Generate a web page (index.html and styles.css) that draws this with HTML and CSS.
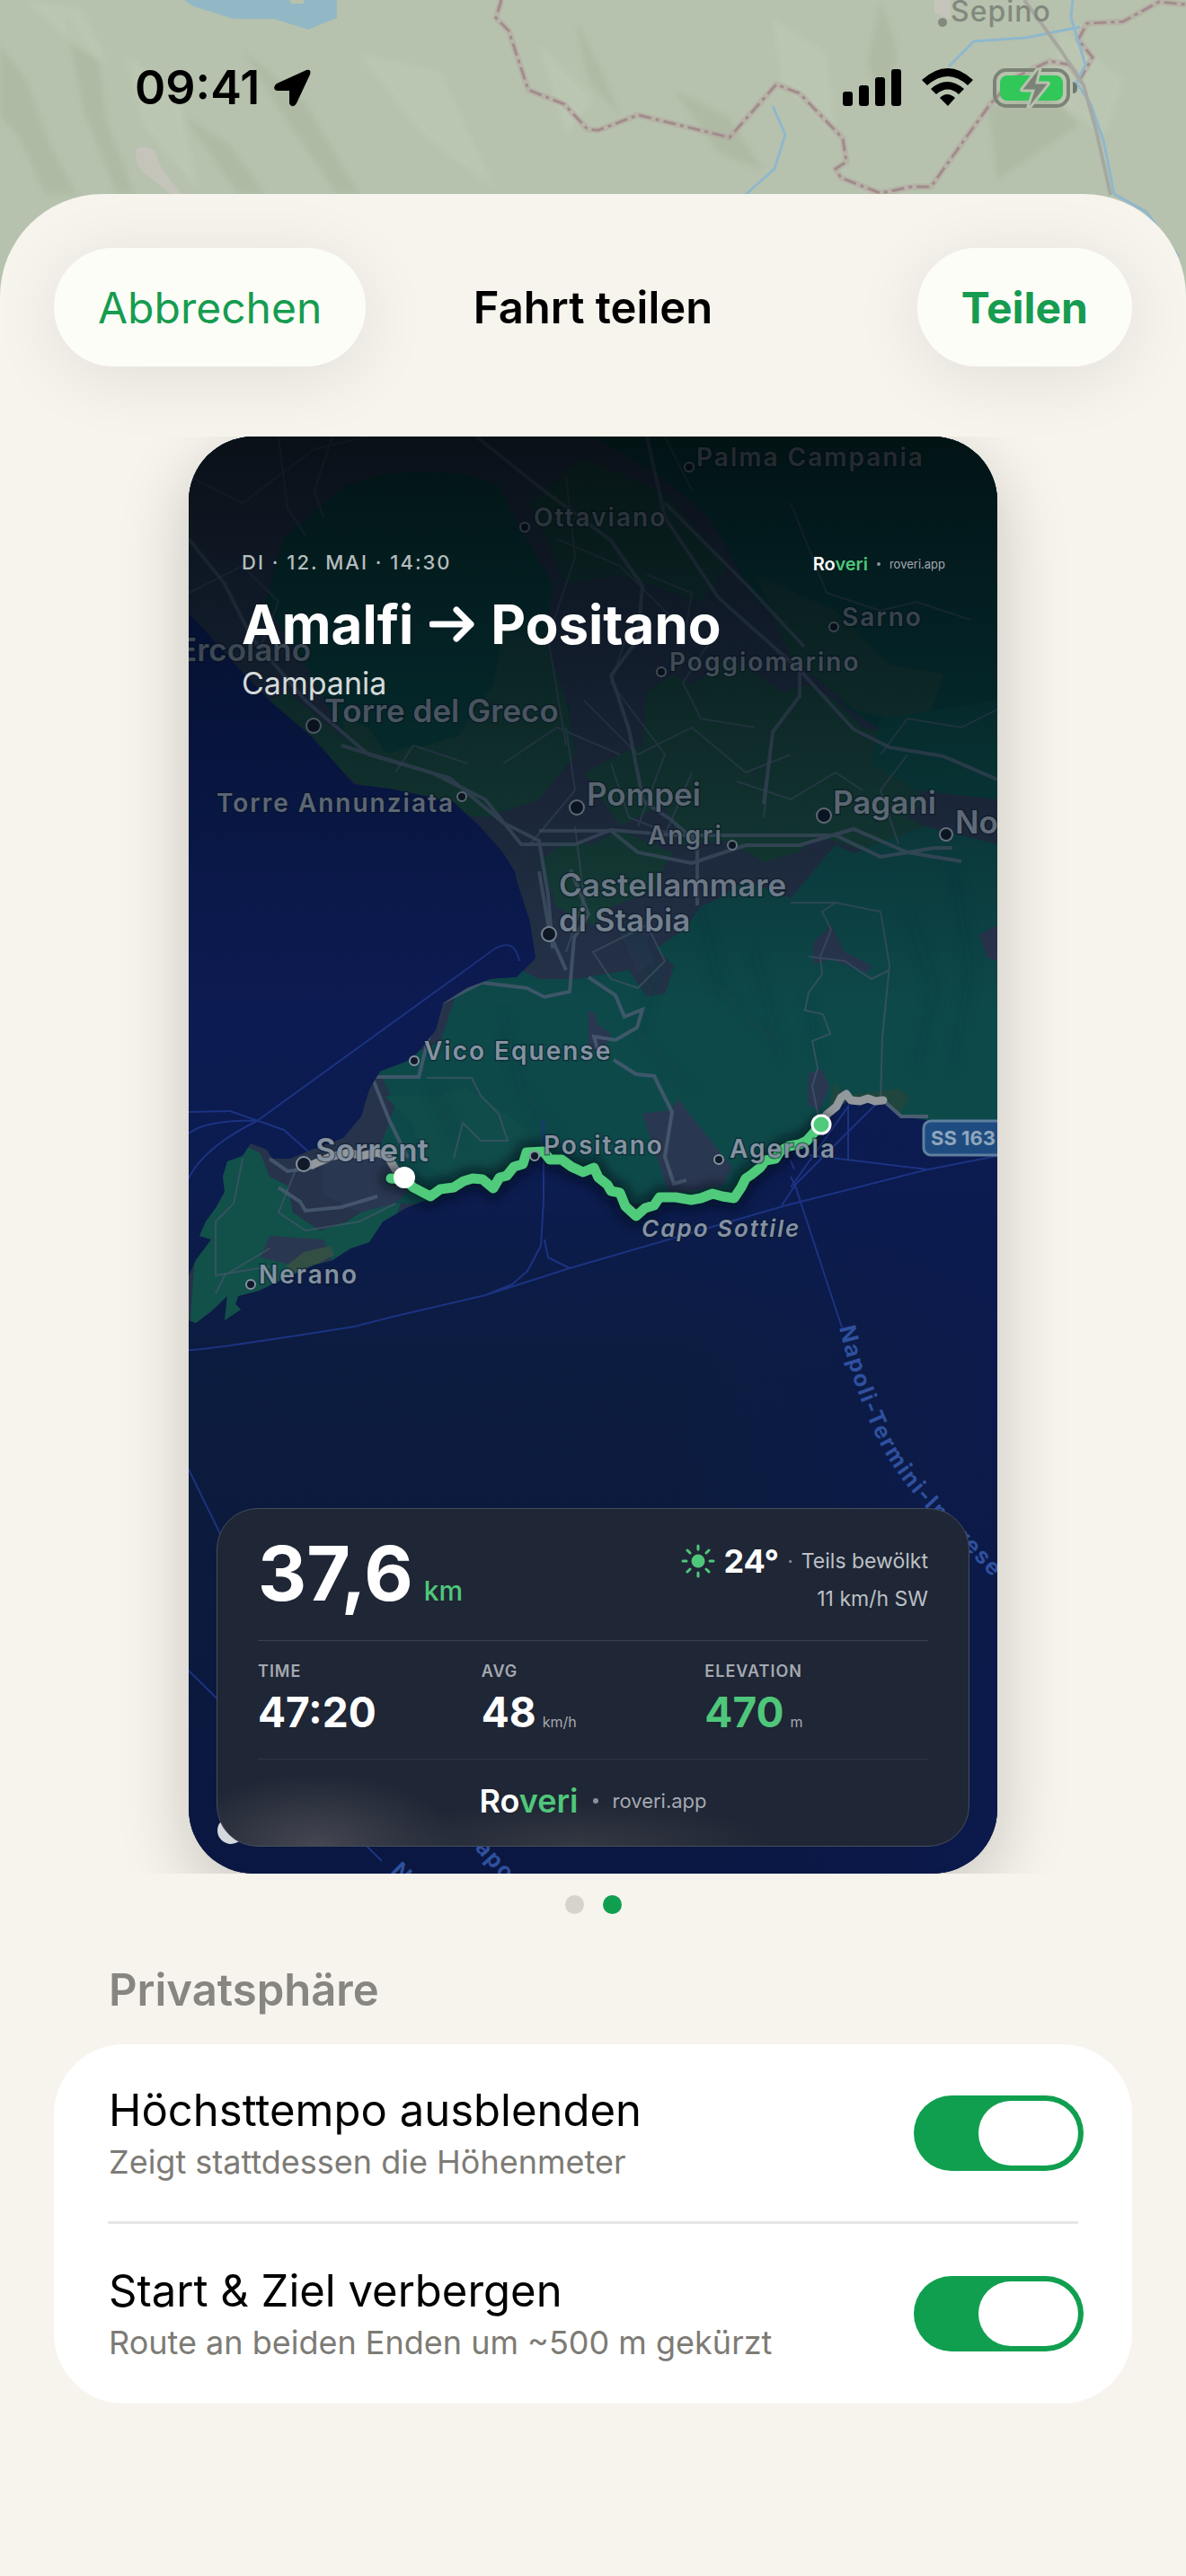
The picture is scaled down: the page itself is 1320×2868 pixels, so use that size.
FILE: index.html
```html
<!DOCTYPE html>
<html lang="de">
<head>
    <meta charset="UTF-8">
    <meta name="viewport" content="width=device-width, initial-scale=1.0">
    <title>Fahrt teilen</title>
    <link rel="stylesheet" href="styles.css">
</head>
<body>
    <div class="backdrop">
        <svg class="backdrop-map" viewBox="0 0 1320 340" preserveAspectRatio="xMidYMin slice" aria-hidden="true">
            <defs>
                <filter id="relief" x="-5%" y="-5%" width="110%" height="110%">
                    <feGaussianBlur stdDeviation="3"/>
                </filter>
            </defs>
            <rect width="1320" height="340" fill="#b6c2ad"/>
            <g fill="#a9b59f" opacity=".6" filter="url(#relief)">
                <path d="M0 50l30 40 25 70 30 56H50L20 150 0 130zM70 10l40 60 10 70 30 76h-20L95 130zM205 130l50 30 40 56h-30zM270 55l70 60 60 101h-25L310 120zM640 20l30 60 20 50-35-40zM980 0l20 60-15 60-20-50zM750 100l60 30 40 60-50-20zM1100 120l70-20 30 40-90 60z"/>
            </g>
            <g fill="#bfcab6" opacity=".6" filter="url(#relief)">
                <path d="M30 0l60 10 30 60-40-20zM140 60l60 50 20 100-60-70zM400 60l90 20 60 130-80-60zM600 50l60 60-30 40zM860 20l60 40 10 90-60-60zM1180 30l70 60-20 60-60-40z"/>
            </g>
            <path d="M205 0h170v20l-32 13-38-12-45 0-45-14z" fill="#92b8c6"/>
            <path d="M322 0h16v4h-14z" fill="#b6c2ad"/>
            <path d="M152 166q8-6 20 2l8 20 22 28h-12l-30-24q-12-12-8-26z" fill="#c5c4bb"/>
            <path d="M1040 0h18v22l-18-8z" fill="#c5c4bb"/>
            <path id="border" d="M558 0L552 20 566 34 588 100 628 116 654 144 666 145 710 128 812 153 864 94 890 104 938 154 942 180 930 188 936 198 980 215 1014 208 1036 208 1076 152 1102 116 1130 86 1168 68 1190 72 1202 88 1216 64 1200 44 1210 26 1250 24 1290 2 1320 5" fill="none" stroke="#b4a9a2" stroke-width="7" opacity=".6"/>
            <path d="M558 0L552 20 566 34 588 100 628 116 654 144 666 145 710 128 812 153 864 94 890 104 938 154 942 180 930 188 936 198 980 215 1014 208 1036 208 1076 152 1102 116 1130 86 1168 68 1190 72 1202 88 1216 64 1200 44 1210 26 1250 24 1290 2 1320 5" fill="none" stroke="#a18b8d" stroke-width="3" stroke-dasharray="14 5 4 5"/>
            <g fill="none" stroke="#8fb7cd" stroke-width="3">
                <path d="M1194 0l-2 20 10 32 6 20-10 20 16 24 14 40 12 60 36 20 36 50M1202 30l-60 12-58 4-28 28M860 118l14 32-12 38-36 32"/>
            </g>
            <path d="M1140 0l40 55 26 40 14 50 16 72" fill="none" stroke="#a6a8a0" stroke-width="4"/>
            <circle cx="1049" cy="25" r="5" fill="#83887e"/>
            <text class="backdrop-label" x="1058" y="24">Sepino</text>
        </svg>
        <header class="status-bar">
            <div class="status-left">
                <span>09:41</span>
                <svg width="42" height="42" viewBox="0 0 42 42" aria-hidden="true">
                    <path d="M36 1q6-1 4 5L25 38q-2 4-5 3-3-1-3-4V24H4q-3 0-4-3 0-3 3-5z"/>
                </svg>
            </div>
            <svg width="262" height="44" viewBox="0 0 262 44" aria-hidden="true">
                <rect x="0" y="26" width="11" height="16" rx="3"/>
                <rect x="18" y="19" width="11" height="23" rx="3"/>
                <rect x="36" y="10" width="11" height="32" rx="3"/>
                <rect x="54" y="1" width="11" height="41" rx="3"/>
                <path d="M88 13q29-26 57 0l-6 6q-22-20-45 0z"/>
                <path d="M98 23q18-16 37 0l-6 6q-12-11-25 0z"/>
                <path d="M108 33q8-8 17 0l-8 9z"/>
                <rect x="169" y="2" width="82" height="40" rx="13" fill="none" stroke="#7b8377" stroke-width="4"/>
                <rect x="175" y="8" width="70" height="28" rx="8" fill="#31c759"/>
                <path d="M256 15q5 1 5 7t-5 6z" fill="#6f766b"/>
                <path d="M217 0l-18 23q-1 2 1 2h12l-6 18h3l20-25q1-2-1-2h-12l4-16z" fill="#7b8377" stroke="#b6c2ad" stroke-width="3"/>
            </svg>
        </header>
    </div>

    <main class="sheet">
        <div class="sheet-bar">
            <button type="button" class="pill">Abbrechen</button>
            <h1>Fahrt teilen</h1>
            <button type="button" class="pill pill-strong">Teilen</button>
        </div>

        <div class="carousel">
            <article class="share-card">
                <svg class="route-map" viewBox="210 486 900 1600" preserveAspectRatio="xMidYMid slice" aria-hidden="true">
                    <defs>
                        <linearGradient id="sea" x1="0" y1="0" x2="0" y2="1">
                            <stop offset="0" stop-color="#0d1f66"/>
                            <stop offset=".4" stop-color="#0c1b52"/>
                            <stop offset=".52" stop-color="#0b1c4f"/>
                            <stop offset=".64" stop-color="#0c1c40"/>
                            <stop offset=".78" stop-color="#0b1a3c"/>
                            <stop offset="1" stop-color="#0a1742"/>
                        </linearGradient>
                        <linearGradient id="shade" x1="0" y1="0" x2="0" y2="1">
                            <stop offset="0" stop-color="#000507" stop-opacity=".76"/>
                            <stop offset=".15" stop-color="#000810" stop-opacity=".54"/>
                            <stop offset=".28" stop-color="#000810" stop-opacity=".26"/>
                            <stop offset=".4" stop-color="#000810" stop-opacity="0"/>
                        </linearGradient>
                        <linearGradient id="east" x1="0" y1="0" x2="1" y2="0">
                            <stop offset=".6" stop-color="#0c1a50" stop-opacity="0"/>
                            <stop offset="1" stop-color="#0c1a50" stop-opacity=".7"/>
                        </linearGradient>
                        <clipPath id="coast">
                            <path d="M210 486H1110V1247H1033L1004 1243 983 1227 942 1226 925 1240 914 1254 898 1272 878 1279 846 1302 825 1326 817 1336 793 1332 769 1337 734 1337 708 1355 696 1345 690 1329 669 1315 661 1303 649 1307 634 1295 605 1286 586 1289 564 1314 549 1324 526 1314 505 1325 479 1334 452 1345 426 1360 411 1383 390 1390 370 1403 350 1408 317 1423 288 1437 265 1443 262 1452 268 1458 250 1470 253 1443 235 1460 218 1473 210 1470V1420L218 1403 235 1380 222 1376 229 1360 240 1345 250 1327 248 1310 253 1293 270 1287 279 1273 297 1280 303 1290 323 1290 347 1280 382 1267 402 1243 411 1213 423 1193 452 1182 464 1173 485 1147 493 1117 520 1100 546 1090 575 1088 596 1067 590 1027 575 980 573 970 558 947 534 920 505 893 435 878 394 873 347 820 300 780 259 737 229 703 210 683z"/>
                        </clipPath>
                        <filter id="soft" x="-20%" y="-20%" width="140%" height="140%">
                            <feGaussianBlur stdDeviation="6"/>
                        </filter>
                    </defs>
                    <rect x="210" y="486" width="900" height="1600" fill="url(#sea)"/>
                    <rect x="210" y="1250" width="900" height="836" fill="url(#east)"/>

                    <!-- land -->
                    <g clip-path="url(#coast)">
                        <rect x="210" y="486" width="900" height="1000" fill="#26334a"/>
                        <path d="M385 540q90-30 170 0l25 50 35 60-10 80 30 60-30 90-60 10-100-20-50-30-50-90-50-80 20-70z" fill="#08403c"/>
                        <path d="M660 486h450v330l-60-20-50 30-60-40-30-60-70-60-50-90-60-50z" fill="#07403e"/>
                        <path d="M560 700l50 20 20 60 10 60-40 50-60 20-100-10-90-60-50-60 20-10 60 50 60 20 70-20 40-60z" fill="#17443c"/>
                        <path d="M720 770l30-20 20 14 40-34 60 40 30-8 30 18 30 30 30 5 10 45 30 30-20 20 20 10-30 20-30 10-60-20-20 18-40 12-40-24-50 4-20-40-30-20zM590 560l60-50 90 40 70 80-30 40-90-30-60 10zM840 640l90 40 60 60 60 10-20 60-80-20-70-60zM600 960l30-24 30 4 30-16 60 26-10 14-10 26-50 20-20 20-40-20zM650 860l60-30 40 60-60 30zM380 800l30 10 20 30 30-10 20 40-30 10-50-10z" fill="#18433b"/>
                        <path d="M880 1000l50-60 20 10 80-30 80 20v310H930l-120 90H400l40-110-20-40 70-30 20-60 70-20 20 10 40 0 60-10 20 30 20-4 10-30-20-20 30-20 20-26 20-10 30-20z" fill="#0e494a"/>
                        <path d="M980 800l130-20v110l-90-10-50-30z" fill="#0b4744"/>
                        <path d="M210 1500l10-150 40-80 30 14 10 26 20 10 6 30 30 20 30-10 30-20 30 0-26 70-120 70z" fill="#12504a"/>
                        <path d="M428 1220l60 0 30-10 60 40 20 30-20 10-60 30-40-20-20-50z" fill="#104c4a"/>
                        <path d="M715 1240l30-4 10-12 20 26 40 50-10 20-60 10zM655 1125l7 2 4 14 14 10-12 24-13-10zM905 1050l20-20 15 30 30 15-5 8-40-15-20 5zM360 1290l60-10 20 20 20 20-20 20-40 10-40-20zM300 1376l60 4 10 26-30 20-10-16-40-10zM690 1040l40-20-10 30 10 20-20 12z" fill="#2a3750"/>
                        <path d="M1090 1040l20-10v40l-12-4zM900 1195l15-5 8 20-10 26-14-6z" fill="#2a3750"/>
                        <path d="M920 1240l10-34 10 14 60-8 12 10-10 16z" fill="#20463d"/>
                        <path d="M318 1410l20-16 30-7 4 10-40 22z" fill="#334f44"/>
                        <g fill="none" stroke="#0a4044" stroke-width="8" opacity=".5" filter="url(#soft)">
                            <path d="M690 1020l40 60-20 70 60 60M780 1010l20 90 60 60M840 1060l30 120M900 1110l10 70M1010 1010l30 90-20 90M1060 960l20 120-20 110M560 1130l20 80 50 70M480 1210l30 60"/>
                        </g>
                        <!-- minor roads -->
                        <g fill="none" stroke="#45566a" stroke-width="2" opacity=".7">
                            <path d="M210 530l60 30 80-60 60-14M310 486l10 80 20 30M630 530l10 90-30 90 20 120M620 600l70 30 60 60M650 780l60 60 60-30 60 50 50-20M560 850l60-40 70 30M700 700l-20 60 60 80-30 80M880 560l40 100 60 20 40-10 60 20M770 860l-30 70M860 820l-10 90M980 840l30-40 60 10 40-20M520 850l-60-20-20 30M640 920l10 80-20 60M660 1060l60-30 20 40-30 30-30-10z"/>
                            <path d="M210 660l60-30 40 40-20 50M370 486l-20 60 10 30M590 940l50-60-10-70M680 850l20 60 50 20M800 700l-40 60 20 40 60 10M820 870l60 20 50-30 30 20M1000 940l-20-60 30-40M720 640l50 20-10 60M740 486l30 60"/>
                            <path d="M880 1005l50 0 50 10 10 60-8 80-2 70M930 1005l-15 10 10 20-12 30 2 20-15 20-4 20 20 4 8 22-20 8 6 30-6 20 8 40-2 60M900 1065l40 5 30 20 20-10"/>
                            <path d="M475 1200l50 0 10 20 20 20 10 30-30 0-20-20-10 40M330 1300l-20 50 30 20 60-10 40-20M270 1290l-10 50-20 20 0 60 60-10M300 1390l-50 30-10 20"/>
                        </g>
                        <!-- main roads -->
                        <g fill="none" stroke="#4c5d73" stroke-width="4" opacity=".8">
                            <path d="M210 600l40 50 30 60 60 70 70 60 90 26 60 50 40 20 10 60 5 60"/>
                            <path d="M530 486l70 56 80 60 35 50-5 60-30 40 20 60 16 80 30 20 30 26v70"/>
                            <path d="M720 486l20 90 60 90 90 80 60 66 40 20 60 10 60 26"/>
                            <path d="M890 745v30l-30 40-10 80M740 560l90 90 65 70"/>
                            <path d="M380 830l100 30 60 30 40 50h60l40-16 70 6h120l60 0 50 24 60-10 20 0M600 925l80 0 30 24 60 12 60-20 60 0 60-18 60 26 60 10"/>
                            <path d="M600 970l12 70 18 40M440 1199h-26l20 50 20 40M440 1199h26l20-80 50-25 50 6 20 10 28-6 5-60 16-26-20-50M655 1088l30 20 10 24 20-8-6 20-24 14-24-4 4 14"/>
                            <path d="M683 1180l25 16 20 2 20 40-8 50 10 30 14-4"/>
                            <path d="M300 1290l20 14 30-4M310 1322l24 16 6 10 40-4 40-12"/>
                        </g>
                    </g>
                    <path d="M983 1225l20 18h30" fill="none" stroke="#4c5d73" stroke-width="4"/>

                    <!-- ferry lines -->
                    <g fill="none" stroke="#1c3382" stroke-width="2">
                        <path d="M210 1238l46-1 60 21 27 24M210 1312q16-34 76-64l265-192q22-12 27 14M210 1262q20-16 76-14M210 1503q20 0 184-26l47-12 52-12 47-11 30-12 17-15 15-28 3-50v-90M540 1442l94-30 241-70 158-40 77-15M606 1380l4 20 24 12M880 1310l5 10 52 158M884 1302l-4-10M880 1322l64-90 0 60M900 1286l133 16M870 1342l16-24 90-90M210 1636l44 90M210 1860l215 212"/>
                    </g>

                    <!-- route -->
                    <g fill="none" stroke-linejoin="round" stroke-linecap="round">
                        <path d="M914 1252L920 1241 931 1232 936 1222 942 1218 947 1225 957 1226 966 1223 974 1226 983 1225M450 1312L440 1302 432 1288 420 1283 402 1287 388 1283 368 1288 347 1297" stroke="#92989c" stroke-width="9"/>
                        <path d="M435 1312L450 1313 460 1322 479 1332 490 1324 505 1322 516 1315 526 1312 537 1313 549 1323 556 1311 564 1309 572 1299 582 1296 586 1283 605 1282 612 1291 625 1291 636 1299 649 1305 661 1300 666 1311 676 1319 680 1326 690 1328 696 1343 708 1354 718 1345 728 1342 734 1333 752 1333 769 1336 780 1334 793 1329 804 1332 817 1334 825 1322 830 1312 836 1308 846 1300 852 1292 863 1290 868 1282 878 1276 890 1274 898 1270 914 1252" stroke="#020a12" stroke-width="22" opacity=".6" filter="url(#soft)"/>
                        <path d="M435 1312L450 1313 460 1322 479 1332 490 1324 505 1322 516 1315 526 1312 537 1313 549 1323 556 1311 564 1309 572 1299 582 1296 586 1283 605 1282 612 1291 625 1291 636 1299 649 1305 661 1300 666 1311 676 1319 680 1326 690 1328 696 1343 708 1354 718 1345 728 1342 734 1333 752 1333 769 1336 780 1334 793 1329 804 1332 817 1334 825 1322 830 1312 836 1308 846 1300 852 1292 863 1290 868 1282 878 1276 890 1274 898 1270 914 1252" stroke="#4fcb7b" stroke-width="11"/>
                    </g>

                    <!-- places -->
                    <g class="place-dots">
                        <circle cx="767" cy="520" r="5"/><circle cx="584" cy="587" r="5"/>
                        <circle cx="928" cy="698" r="5"/><circle cx="736" cy="748" r="5"/>
                        <circle cx="349" cy="808" r="8"/><circle cx="514" cy="887" r="5"/>
                        <circle cx="642" cy="899" r="8"/><circle cx="815" cy="941" r="5"/>
                        <circle cx="917" cy="908" r="8"/><circle cx="1053" cy="929" r="7"/>
                        <circle cx="611" cy="1040" r="8"/><circle cx="461" cy="1181" r="5"/>
                        <circle cx="338" cy="1296" r="8"/><circle cx="595" cy="1287" r="5"/>
                        <circle cx="800" cy="1291" r="5"/><circle cx="279" cy="1430" r="5"/>
                    </g>
                    <g class="places">
                        <text x="775" y="519">Palma Campania</text>
                        <text x="594" y="586">Ottaviano</text>
                        <text x="937" y="697">Sarno</text>
                        <text x="745" y="747">Poggiomarino</text>
                        <text x="241" y="904">Torre Annunziata</text>
                        <text x="721" y="940">Angri</text>
                        <text x="472" y="1180">Vico Equense</text>
                        <text x="605" y="1285">Positano</text>
                        <text x="812" y="1289">Agerola</text>
                        <text x="288" y="1429">Nerano</text>
                        <text class="cape" x="714" y="1377">Capo Sottile</text>
                    </g>
                    <g class="places places-big">
                        <text x="198" y="736">Ercolano</text>
                        <text x="361" y="804">Torre del Greco</text>
                        <text x="653" y="897">Pompei</text>
                        <text x="927" y="906">Pagani</text>
                        <text x="1063" y="928">No</text>
                        <text x="622" y="998">Castellammare</text>
                        <text x="622" y="1037">di Stabia</text>
                        <text x="351" y="1293">Sorrent</text>
                    </g>
                    <rect x="1028" y="1248" width="110" height="38" rx="8" fill="#1f4c80" stroke="#5f7f9f" stroke-width="3"/>
                    <text class="shield" x="1036" y="1275">SS 163</text>
                    <path id="ferry" d="M934 1478q14 60 36 110t62 92 76 80" fill="none"/>
                    <text class="ferry-label"><textPath href="#ferry">Napoli-Termini-Imerese</textPath></text>
                    <path id="ferry-south" d="M434 2084l60 60" fill="none"/>
                    <text class="ferry-label"><textPath href="#ferry-south">N</textPath></text>
                    <path id="ferry-south-2" d="M528 2058l60 66" fill="none"/>
                    <text class="ferry-label"><textPath href="#ferry-south-2">apo</textPath></text>

                    <circle cx="450" cy="1311" r="12" fill="#fff"/>
                    <circle cx="914" cy="1252" r="10" fill="#4fcb7b" stroke="#fff" stroke-width="3"/>
                    <circle cx="257" cy="2038" r="15" fill="#d5d8dc"/>
                    <rect x="210" y="486" width="900" height="1600" fill="url(#shade)"/>
                </svg>

                <div class="card-head">
                    <div class="card-meta">
                        <span class="card-date">DI · 12. MAI · 14:30</span>
                        <div class="brand brand-small">
                            <strong>Ro<em>veri</em></strong>
                            <i></i>
                            <span>roveri.app</span>
                        </div>
                    </div>
                    <h2>
                        Amalfi
                        <svg width="50" height="40" viewBox="0 0 50 40" aria-label="nach"><path d="M3 20h43M30 4l16 16-16 16"/></svg>
                        Positano
                    </h2>
                    <p>Campania</p>
                </div>

                <section class="stats">
                    <div class="stats-top">
                        <div class="distance">37,6<small>km</small></div>
                        <div class="weather">
                            <div class="weather-now">
                                <svg width="38" height="38" viewBox="0 0 38 38" aria-hidden="true">
                                    <circle cx="19" cy="19" r="6"/>
                                    <path d="M19 2v4M19 32v4M2 19h4M32 19h4M7 7l3 3M28 28l3 3M31 7l-3 3M10 28l-3 3"/>
                                </svg>
                                <strong>24°</strong>
                                <i>·</i>
                                <span>Teils bewölkt</span>
                            </div>
                            <div>11 km/h SW</div>
                        </div>
                    </div>
                    <dl class="metrics">
                        <div>
                            <dt>TIME</dt>
                            <dd>47:20</dd>
                        </div>
                        <div>
                            <dt>AVG</dt>
                            <dd>48<small>km/h</small></dd>
                        </div>
                        <div>
                            <dt>ELEVATION</dt>
                            <dd class="accent">470<small>m</small></dd>
                        </div>
                    </dl>
                    <div class="brand">
                        <strong>Ro<em>veri</em></strong>
                        <i></i>
                        <span>roveri.app</span>
                    </div>
                </section>
            </article>
        </div>

        <div class="dots">
            <span></span>
            <span class="active"></span>
        </div>

        <section class="privacy">
            <h2>Privatsphäre</h2>
            <div class="settings">
                <div class="setting">
                    <label for="hide-speed">
                        Höchsttempo ausblenden
                        <small>Zeigt stattdessen die Höhenmeter</small>
                    </label>
                    <input type="checkbox" role="switch" id="hide-speed" checked>
                </div>
                <div class="setting">
                    <label for="hide-ends">
                        Start &amp; Ziel verbergen
                        <small>Route an beiden Enden um ~500 m gekürzt</small>
                    </label>
                    <input type="checkbox" role="switch" id="hide-ends" checked>
                </div>
            </div>
        </section>
    </main>
</body>
</html>
```
FILE: styles.css
```css
* {
    box-sizing: border-box;
}
body {
    margin: 0;
    min-height: 100vh;
    display: flex;
    flex-direction: column;
    font-family: Inter, "Liberation Sans", sans-serif;
    background: #b6c2ad;
    color: #000;
}
h1, h2, p, dl, dd {
    margin: 0;
}
button, input {
    font: inherit;
}

/* map and status bar behind the sheet */
.backdrop {
    position: relative;
    height: 216px;
}
.backdrop-map {
    position: absolute;
    top: 0;
    left: 0;
    width: 100%;
    height: 340px;
}
.backdrop-label {
    font-size: 32px;
    font-weight: 500;
    letter-spacing: 1px;
    fill: #83887e;
}
.status-bar {
    position: relative;
    display: flex;
    justify-content: space-between;
    align-items: center;
    padding: 66px 120px 0 150px;
}
.status-left {
    display: flex;
    align-items: center;
    gap: 16px;
    font-size: 52px;
    line-height: 64px;
    font-weight: 600;
}

/* sheet */
.sheet {
    position: relative;
    flex: 1;
    background: #f7f4ed;
    border-radius: 114px 114px 0 0;
    padding: 60px 0;
}
.sheet-bar {
    display: grid;
    grid-template-columns: 1fr auto 1fr;
    align-items: center;
    padding: 0 60px;
}
.sheet-bar h1 {
    font-size: 49px;
    font-weight: 600;
}
.pill {
    justify-self: start;
    height: 132px;
    padding: 0 49px;
    border: none;
    border-radius: 66px;
    background: #fdfdf8;
    box-shadow: 0 12px 80px rgba(0, 0, 0, 0.09);
    color: #169c50;
    font-size: 48px;
    cursor: pointer;
}
.pill-strong {
    justify-self: end;
    font-weight: 700;
}

/* share card */
.carousel {
    display: flex;
    justify-content: center;
    margin-top: 78px;
    overflow: hidden;
}
.share-card {
    position: relative;
    display: flex;
    flex-direction: column;
    justify-content: space-between;
    width: 100%;
    max-width: 900px;
    aspect-ratio: 9 / 16;
    border-radius: 72px;
    background: #0b1a3f;
    box-shadow: 0 24px 80px rgba(0, 0, 0, 0.2);
    color: #fff;
}
.route-map {
    position: absolute;
    top: 0;
    left: 0;
    width: 100%;
    height: 100%;
    border-radius: 72px;
}
.places text {
    font-size: 28px;
    font-weight: 600;
    letter-spacing: 2px;
    fill: #8592a1;
    paint-order: stroke;
    stroke: rgba(10, 25, 40, 0.5);
    stroke-width: 3px;
}
.places .cape {
    font-size: 26px;
    font-style: italic;
}
.places-big text {
    font-size: 35px;
    letter-spacing: 0;
}
.place-dots {
    fill: #101a28;
    stroke: #8592a1;
    stroke-width: 2px;
}
.shield {
    font-size: 22px;
    font-weight: 700;
    fill: #8fa5bb;
}
.ferry-label {
    font-size: 25px;
    font-weight: 700;
    letter-spacing: 2px;
    fill: #2f509e;
}
.card-head {
    position: relative;
    padding: 124px 58px 0 59px;
}
.card-meta {
    display: flex;
    justify-content: space-between;
    align-items: center;
    height: 32px;
}
.card-date {
    font-size: 22px;
    font-weight: 500;
    letter-spacing: 2px;
    color: #b4bdbd;
}
.card-head h2 {
    display: flex;
    align-items: center;
    gap: 18px;
    margin-top: 15px;
    font-size: 60px;
    line-height: 76px;
    font-weight: 700;
}
.card-head h2 svg {
    fill: none;
    stroke: #fff;
    stroke-width: 7;
    stroke-linecap: round;
    stroke-linejoin: round;
}
.card-head p {
    margin-top: 6px;
    font-size: 34px;
    line-height: 44px;
    color: #d5dada;
}

.brand {
    display: flex;
    justify-content: center;
    align-items: center;
    gap: 16px;
    font-size: 22px;
    color: #a5a9b1;
}
.brand strong {
    font-size: 36px;
    font-weight: 600;
    color: #fff;
}
.brand em {
    font-style: normal;
    color: #4fc77a;
}
.brand i {
    width: 6px;
    height: 6px;
    border-radius: 50%;
    background: #8b9098;
}
.brand-small {
    gap: 10px;
    padding-top: 4px;
    font-size: 13px;
}
.brand-small strong {
    font-size: 20px;
}
.brand-small i {
    width: 4px;
    height: 4px;
}

.stats {
    position: relative;
    margin: 0 31px 30px;
    padding: 0 45px;
    border: 1px solid #454d5b;
    border-radius: 46px;
    background: radial-gradient(ellipse 160px 80px at 110px 100%, #454751, transparent), radial-gradient(ellipse 220px 50px at 400px 100%, #343842, transparent), #1f2635;
}
.stats-top {
    display: flex;
    justify-content: space-between;
    align-items: center;
    height: 147px;
    padding-top: 12px;
    border-bottom: 1px solid #3a414e;
}
.distance {
    display: flex;
    align-items: baseline;
    gap: 12px;
    padding-top: 4px;
    font-size: 84px;
    font-weight: 700;
    line-height: 96px;
}
.distance small {
    font-size: 30px;
    font-weight: 500;
    color: #4fc77a;
}
.weather {
    font-size: 23px;
    line-height: 42px;
    text-align: right;
    color: #bcc0c6;
}
.weather-now {
    display: flex;
    align-items: center;
    gap: 9px;
}
.weather-now svg {
    fill: #4fc77a;
    stroke: #4fc77a;
    stroke-width: 3;
    stroke-linecap: round;
}
.weather-now strong {
    font-size: 36px;
    color: #fff;
}
.weather-now i {
    font-style: normal;
    color: #8b9098;
}
.metrics {
    display: grid;
    grid-template-columns: repeat(3, 1fr);
    height: 132px;
    padding-top: 14px;
    align-content: center;
    border-bottom: 1px solid #2f3644;
}
.metrics dt {
    font-size: 18px;
    line-height: 24px;
    font-weight: 600;
    letter-spacing: 1px;
    color: #a5a9b1;
}
.metrics dd {
    display: flex;
    align-items: baseline;
    gap: 7px;
    font-size: 46px;
    line-height: 66px;
    font-weight: 700;
}
.metrics small {
    font-size: 16px;
    font-weight: 400;
    color: #a5a9b1;
}
.metrics .accent {
    color: #4fc77a;
}
.stats .brand {
    height: 96px;
    padding-bottom: 4px;
}

.dots {
    display: flex;
    justify-content: center;
    gap: 21px;
    padding: 24px 0;
}
.dots span {
    width: 21px;
    height: 21px;
    border-radius: 50%;
    background: #d6d3cb;
}
.dots .active {
    background: #109f4f;
}

/* settings */
.privacy {
    padding: 30px 60px;
}
.privacy h2 {
    padding: 0 61px;
    font-size: 49px;
    line-height: 62px;
    font-weight: 600;
    color: #878681;
}
.settings {
    margin-top: 29px;
    padding: 0 60px;
    border-radius: 78px;
    background: #fff;
}
.setting {
    display: flex;
    justify-content: space-between;
    align-items: center;
    height: 200px;
}
.setting:first-child {
    border-bottom: 3px solid #e6e6e6;
}
.setting label {
    padding: 4px 0 0 1px;
    font-size: 49px;
    line-height: 60px;
}
.setting small {
    display: block;
    font-size: 36px;
    line-height: 54px;
    color: #7d7b75;
}
.setting input {
    appearance: none;
    display: flex;
    justify-content: flex-end;
    flex: none;
    width: 189px;
    height: 84px;
    margin: 0 -6px 0 0;
    padding: 6px;
    border-radius: 42px;
    background: #109f4f;
    cursor: pointer;
}
.setting input::before {
    content: "";
    width: 111px;
    border-radius: 36px;
    background: #fff;
}
.setting input:not(:checked) {
    justify-content: flex-start;
    background: #d6d3cb;
}
```
